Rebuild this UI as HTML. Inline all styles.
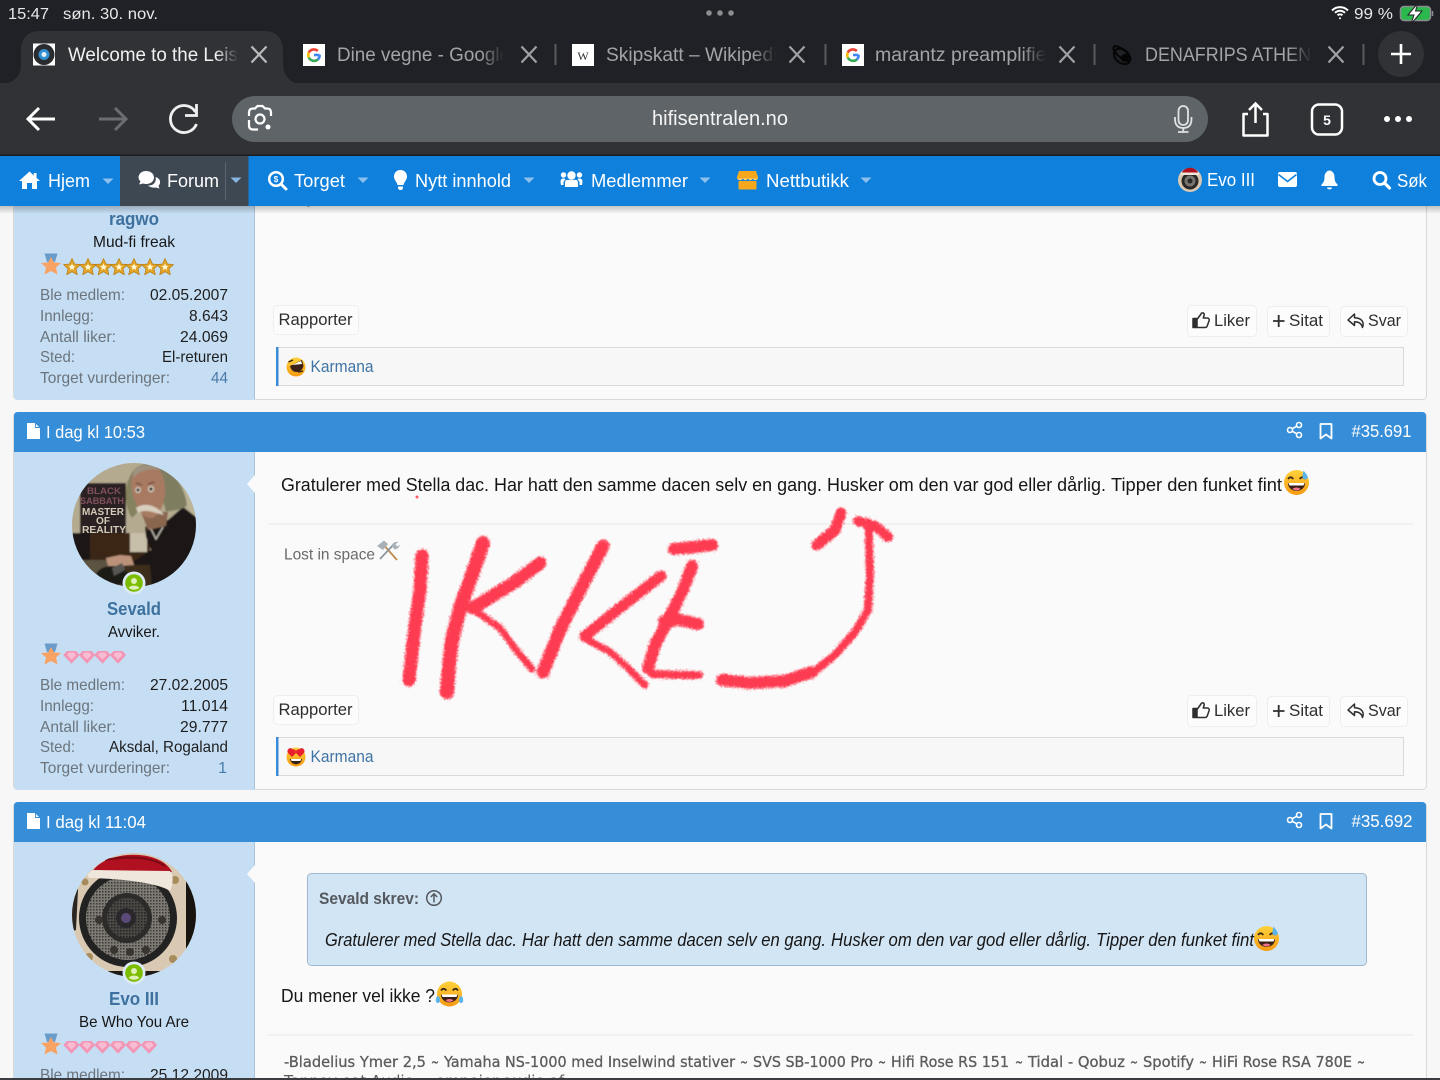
<!DOCTYPE html>
<html lang="no"><head><meta charset="utf-8"><title>hifisentralen.no</title>
<style>
html,body{margin:0;padding:0;background:#f7f7f7;width:1440px;height:1080px;overflow:hidden}
svg{display:block}
text{font-family:"Liberation Sans",Arial,sans-serif}
.nav{font-size:18.5px;fill:#fff}
.tab{font-size:19px;fill:#a3a4a6}
.lab{font-size:16px;fill:#6b747c}
.val{font-size:16px;fill:#1e1e1e;text-anchor:end}
.btn{font-size:17px;fill:#2e2e2e}
.hd{font-size:17.5px;fill:#fff}
.body{font-size:18.5px;fill:#161616}
.ita{font-size:18px;font-style:italic;fill:#161616}
.name{font-size:18.5px;font-weight:bold;fill:#3f719f;text-anchor:middle}
.title{font-size:16px;fill:#161616;text-anchor:middle}
.kar{font-size:16.5px;fill:#3f74a4}
.sig{font-size:15px;fill:#5c5c5c;stroke:#5c5c5c;stroke-width:.3px}
.sig,.sig2{font-family:"DejaVu Sans",sans-serif}
.sig2{font-size:15px;fill:#5c5c5c}
</style></head><body>
<svg xmlns="http://www.w3.org/2000/svg" width="1440" height="1080" viewBox="0 0 1440 1080">
<defs>
<linearGradient id="fa" x1="0" x2="1" y1="0" y2="0"><stop offset="0" stop-color="#303236" stop-opacity="0"/><stop offset="1" stop-color="#303236"/></linearGradient>
<linearGradient id="fi" x1="0" x2="1" y1="0" y2="0"><stop offset="0" stop-color="#1f2126" stop-opacity="0"/><stop offset="1" stop-color="#1f2126"/></linearGradient>
<linearGradient id="shadow" x1="0" x2="0" y1="0" y2="1"><stop offset="0" stop-color="#000" stop-opacity=".22"/><stop offset="1" stop-color="#000" stop-opacity="0"/></linearGradient>
<linearGradient id="emo" x1="0" x2="0" y1="0" y2="1"><stop offset="0" stop-color="#ffd23c"/><stop offset="1" stop-color="#f59a12"/></linearGradient>
<filter id="rough" x="-10%" y="-10%" width="120%" height="120%"><feTurbulence type="fractalNoise" baseFrequency=".85" numOctaves="2" seed="4"/><feDisplacementMap in="SourceGraphic" scale="8" xChannelSelector="R" yChannelSelector="G"/><feGaussianBlur stdDeviation=".5"/></filter>
<filter id="soft"><feGaussianBlur stdDeviation=".7"/></filter>
<filter id="soft2"><feGaussianBlur stdDeviation=".35"/></filter>
<clipPath id="c1"><circle cx="134" cy="525" r="62"/></clipPath>
<clipPath id="c2"><circle cx="134" cy="915" r="62"/></clipPath>
<pattern id="mesh" width="3" height="3" patternUnits="userSpaceOnUse"><rect width="3" height="3" fill="#7d7973"/><rect width="1.500" height="1.500" fill="#3a3835"/></pattern>
<pattern id="mesh2" width="3" height="3" patternUnits="userSpaceOnUse"><rect width="3" height="3" fill="#4a4845"/><rect width="1.500" height="1.500" fill="#232220"/></pattern>

<g id="caret"><path d="M-5.500-2.500H5.500L0 3Z" fill="#8ec0ee"/></g>
<g id="x"><path d="M-7.500-8 7.500 8M7.500-8-7.500 8" stroke-width="2.200" fill="none"/></g>
<g id="gfav"><rect x="-11" y="-11" width="22" height="22" fill="#fff"/>
<path d="M5.500 0H0" stroke="#4285f4" stroke-width="2.600" fill="none"/>
<path d="M5.600-.2A5.800 5.800 0 0 1 3.800 4.500" stroke="#4285f4" stroke-width="2.600" fill="none"/>
<path d="M3.800 4.500A5.800 5.800 0 0 1-5.200 2.500" stroke="#34a853" stroke-width="2.600" fill="none"/>
<path d="M-5.200 2.500A5.800 5.800 0 0 1-5.200-2.500" stroke="#fbbc05" stroke-width="2.600" fill="none"/>
<path d="M-5.200-2.500A5.800 5.800 0 0 1 3.800-4" stroke="#ea4335" stroke-width="2.600" fill="none"/></g>

<g id="medal"><path d="M-6.500-10.500H6.500L4-2H-4Z" fill="#6a9cc9"/><path d="M0-7 3-1.500 10 -1 5 3.500 6.500 10.500 0 7-6.500 10.500-5 3.500-10-1-3-1.500Z" fill="#f8a264"/></g>
<g id="star"><path d="M0-8.500 2.500-3 8.500-2.400 4 1.700 5.300 7.800 0 4.700-5.300 7.800-4 1.700-8.500-2.400-2.500-3Z" fill="#e2a52a" stroke="#b57c10" stroke-width=".7" stroke-linejoin="round"/><path d="M0-3.500 1-1.200 3.400-1 1.600.6 2.100 3 0 1.800-2.100 3-1.600.6-3.400-1-1-1.200Z" fill="#fff8d6"/></g>
<g id="gem"><path d="M-4.500-6H4.500L8.200-2 0 6.800-8.200-2Z" fill="#f296b6"/><path d="M-2.500-4.500H2.500L4.500-2 0 2.500-4.500-2Z" fill="#f9bcd2"/></g>

<g id="online"><circle r="11.500" fill="#dcebf7"/><circle r="8.800" fill="#7dbd00"/><circle cy="-2" r="3" fill="#dff0b8"/><path d="M-5.200 5C-4.200 1.800 4.200 1.800 5.200 5A8.800 8.800 0 0 1-5.200 5Z" fill="#dff0b8"/></g>

<g id="thumb"><path d="M1 7H5V16H1ZM5 8 9 2.500C9.500 1 12 .8 12.300 3L11.300 6.500H15.500C17 6.500 17.500 8 17 9.500L15.200 14.500C14.800 15.500 14 16 13 16H5" fill="none" stroke="#2e2e2e" stroke-width="1.500" stroke-linejoin="round"/><path d="M1 7H5V16H1Z" fill="#2e2e2e"/></g>
<g id="reply"><path d="M7.500 1.500 1 7.500 7.500 13V9.300C11.500 9.300 14.500 10.500 15.500 15 17.500 10 15 5.500 7.500 5.300Z" fill="none" stroke="#2e2e2e" stroke-width="1.500" stroke-linejoin="round"/></g>
<g id="share"><g fill="none" stroke="#fff" stroke-width="1.600"><circle cx="3.500" cy="8" r="2.500"/><circle cx="12.500" cy="3" r="2.500"/><circle cx="12.500" cy="13" r="2.500"/><path d="M5.700 6.800 10.300 4.200M5.700 9.200 10.300 11.800"/></g></g>
<g id="bm"><path d="M1 1H12V15.500L6.500 11.500 1 15.500Z" fill="none" stroke="#fff" stroke-width="1.800" stroke-linejoin="round"/></g>
<g id="doc"><path d="M0 0H8L13 5V16H0Z" fill="#fff"/><path d="M8.500 0V4.500H13" fill="none" stroke="#368dd8" stroke-width=".9"/></g>

<g id="grin"><circle r="12.500" fill="url(#emo)"/><path d="M-8.500-3.500Q-6-7-3.200-3.500M3.200-3.500Q6-7 8.500-3.500" fill="none" stroke="#3a2a18" stroke-width="1.800"/><path d="M-8.500 0.500H8.500C8.500 11-8.500 11-8.500 .5Z" fill="#3a2016"/><path d="M-8 .5H8L7 3H-7Z" fill="#fff"/><path d="M-4 6.300C-2 4.500 2 4.500 4 6.300 2 8.500-2 8.500-4 6.300Z" fill="#f0748a"/></g>
</defs>

<!-- page -->
<rect width="1440" height="1080" fill="#f7f7f7"/>

<!-- post 1 -->
<rect x="13.500" y="180" width="1413" height="219.500" rx="4" fill="#fafafa" stroke="#d9d9d9"/>
<path d="M14 180H255V400H18Q14 400 14 396Z" fill="#c6def4"/>
<path d="M254.500 180V399" stroke="#a9c3da"/>
<text x="304" y="203" font-size="16" fill="#555">g</text>
<text x="134" y="225" class="name" textLength="50" lengthAdjust="spacingAndGlyphs">ragwo</text>
<text x="134" y="247" class="title" textLength="82" lengthAdjust="spacingAndGlyphs">Mud-fi freak</text>
<use href="#medal" x="51" y="264"/>
<use href="#star" x="72" y="267"/><use href="#star" x="88" y="267"/><use href="#star" x="103.500" y="267"/><use href="#star" x="119" y="267"/><use href="#star" x="134" y="267"/><use href="#star" x="150" y="267"/><use href="#star" x="165" y="267"/>
<text x="40" y="300" class="lab" textLength="85" lengthAdjust="spacingAndGlyphs">Ble medlem:</text>
<text x="40" y="321" class="lab" textLength="54" lengthAdjust="spacingAndGlyphs">Innlegg:</text>
<text x="40" y="342" class="lab" textLength="76" lengthAdjust="spacingAndGlyphs">Antall liker:</text>
<text x="40" y="362" class="lab" textLength="35" lengthAdjust="spacingAndGlyphs">Sted:</text>
<text x="40" y="383" class="lab" textLength="130" lengthAdjust="spacingAndGlyphs">Torget vurderinger:</text>
<text x="228" y="300" class="val" textLength="78" lengthAdjust="spacingAndGlyphs">02.05.2007</text>
<text x="228" y="321" class="val" textLength="39" lengthAdjust="spacingAndGlyphs">8.643</text>
<text x="228" y="342" class="val" textLength="48" lengthAdjust="spacingAndGlyphs">24.069</text>
<text x="228" y="362" class="val" textLength="66" lengthAdjust="spacingAndGlyphs">El-returen</text>
<text x="228" y="383" class="val" style="fill:#4a7ba8" textLength="17" lengthAdjust="spacingAndGlyphs">44</text>

<rect x="273.500" y="305.500" width="85" height="29" rx="4" fill="#fcfcfc" stroke="#eeeeee"/>
<text x="278.500" y="325" class="btn" textLength="74" lengthAdjust="spacingAndGlyphs">Rapporter</text>
<rect x="1187.500" y="305.500" width="69" height="31" rx="4" fill="#fcfcfc" stroke="#eeeeee"/>
<rect x="1267.500" y="306.500" width="62" height="30" rx="4" fill="#fcfcfc" stroke="#eeeeee"/>
<rect x="1340.500" y="306.500" width="67" height="30" rx="4" fill="#fcfcfc" stroke="#eeeeee"/>
<use href="#thumb" x="1192" y="311.500"/>
<text x="1214" y="326" class="btn" textLength="36" lengthAdjust="spacingAndGlyphs">Liker</text>
<path d="M1273 321H1284.500M1278.700 315V327" stroke="#2e2e2e" stroke-width="1.800"/>
<text x="1289" y="326" class="btn" textLength="34" lengthAdjust="spacingAndGlyphs">Sitat</text>
<use href="#reply" x="1347" y="312.500"/>
<text x="1368" y="326" class="btn" textLength="33" lengthAdjust="spacingAndGlyphs">Svar</text>
<rect x="276.500" y="347.500" width="1127" height="38" fill="#f7f7f7" stroke="#dadada"/>
<rect x="276" y="347" width="2.500" height="39" fill="#3a8cd8"/>
<circle cx="296" cy="367" r="9.500" fill="url(#emo)"/>
<path d="M290 366 302 360 303.500 366C302 373 292 375 290 366Z" fill="#3a2016"/><path d="M292 365 301 361 302 364Z" fill="#fff"/><path d="M288.500 362 293 360M298 372 303 371" stroke="#3a2a18" stroke-width="1.500"/>
<text x="310.500" y="372" class="kar" textLength="63" lengthAdjust="spacingAndGlyphs">Karmana</text>

<!-- post 2 -->
<rect x="13.500" y="412.500" width="1413" height="377" rx="4" fill="#fafafa" stroke="#d9d9d9"/>
<path d="M14 452H255V790H18Q14 790 14 786Z" fill="#c6def4"/>
<path d="M254.500 452V789" stroke="#a9c3da"/>
<path d="M14 452V416Q14 412 18 412H1422Q1426 412 1426 416V452Z" fill="#368dd8"/>
<path d="M255 475 247 484 255 493Z" fill="#fafafa"/>
<use href="#doc" x="27" y="423"/>
<text x="46" y="438" class="hd" textLength="99" lengthAdjust="spacingAndGlyphs">I dag kl 10:53</text>
<use href="#share" x="1286.500" y="422"/><use href="#bm" x="1319.500" y="423"/>
<text x="1351.500" y="437" class="hd" textLength="60" lengthAdjust="spacingAndGlyphs">#35.691</text>

<g clip-path="url(#c1)"><g filter="url(#soft)">
<rect x="70" y="460" width="130" height="130" fill="#b4aa90"/>
<path d="M160 470 200 470V525L186 505Z" fill="#bdb396"/>
<rect x="80" y="483" width="46" height="50" fill="#2c2422"/>
<rect x="70" y="533" width="21" height="30" fill="#1c1612"/>
<rect x="90" y="533" width="60" height="33" fill="#3a2815"/>
<rect x="130" y="533" width="17" height="19" fill="#c8bfaa"/>
<rect x="70" y="560" width="60" height="30" fill="#5c5342"/>
<path d="M131 563 151 550 146 537 145 527 168 520 183 507 200 520V592H150Z" fill="#1b1917"/>
<path d="M125 565H150L152 590H120Z" fill="#3c2d1c"/>
<path d="M106 558 120 555 131 556 134 565 118 566 108 566Z" fill="#bb917a"/>
<ellipse cx="112" cy="576" rx="16" ry="10" fill="#1c1a16"/>
<path d="M112 568 122 563 125 570 114 576Z" fill="#595752"/>
<path d="M128 490C127 470 140 463 150 464 165 465 184 480 187 505 182 511 172 510 166 512L160 490Z" fill="#7f7d60"/>
<path d="M128 480C124 495 126 510 132 518L138 512 134 482Z" fill="#85825f"/>
<path d="M141 512 168 512 166 526 148 530Z" fill="#8a664f"/>
<path d="M131 482C132 470 142 464 150 465 160 466 165 476 165 490 165 503 160 518 150 518 140 518 132 498 131 482Z" fill="#a87a62"/>
<path d="M133 472C138 464 154 462 160 470 150 468 140 470 133 478Z" fill="#a09280"/>
<path d="M136 508C142 503 155 503 164 515 155 513 145 508 138 513Z" fill="#d9cfbe"/>
<ellipse cx="138" cy="490" rx="2.800" ry="3" fill="#ddd4c8"/><ellipse cx="151" cy="489" rx="3" ry="3.200" fill="#ddd4c8"/>
<circle cx="138" cy="490" r="1.600" fill="#2a1a14"/><circle cx="151" cy="489" r="1.700" fill="#2a1a14"/>
<path d="M136 483 142 485M148 484 155 482" stroke="#6a4a38" stroke-width="1.300"/>
<path d="M163 527 156 539 151 529" fill="none" stroke="#c4c0b4" stroke-width="1.300"/>
</g>
<g filter="url(#soft2)">
<text x="104" y="494" text-anchor="middle" font-size="9.500" font-weight="bold" fill="#80505c" textLength="34" lengthAdjust="spacingAndGlyphs">BLACK</text>
<text x="102" y="504" text-anchor="middle" font-size="9.500" font-weight="bold" fill="#80505c" textLength="44" lengthAdjust="spacingAndGlyphs">SABBATH</text>
<text x="103" y="515" text-anchor="middle" font-size="10.500" font-weight="bold" fill="#d6cbb8" textLength="42" lengthAdjust="spacingAndGlyphs">MASTER</text>
<text x="103" y="524" text-anchor="middle" font-size="10" font-weight="bold" fill="#d6cbb8" textLength="14" lengthAdjust="spacingAndGlyphs">OF</text>
<text x="104" y="533" text-anchor="middle" font-size="10.500" font-weight="bold" fill="#d6cbb8" textLength="44" lengthAdjust="spacingAndGlyphs">REALITY</text>
</g>
</g>
<use href="#online" x="134" y="583"/>
<text x="134" y="615" class="name" textLength="54" lengthAdjust="spacingAndGlyphs">Sevald</text>
<text x="134" y="637" class="title" textLength="52" lengthAdjust="spacingAndGlyphs">Avviker.</text>
<use href="#medal" x="51" y="654"/>
<use href="#gem" x="71.500" y="657"/><use href="#gem" x="87" y="657"/><use href="#gem" x="102.500" y="657"/><use href="#gem" x="118" y="657"/>
<text x="40" y="690" class="lab" textLength="85" lengthAdjust="spacingAndGlyphs">Ble medlem:</text>
<text x="40" y="711" class="lab" textLength="54" lengthAdjust="spacingAndGlyphs">Innlegg:</text>
<text x="40" y="732" class="lab" textLength="76" lengthAdjust="spacingAndGlyphs">Antall liker:</text>
<text x="40" y="752" class="lab" textLength="35" lengthAdjust="spacingAndGlyphs">Sted:</text>
<text x="40" y="773" class="lab" textLength="130" lengthAdjust="spacingAndGlyphs">Torget vurderinger:</text>
<text x="228" y="690" class="val" textLength="78" lengthAdjust="spacingAndGlyphs">27.02.2005</text>
<text x="228" y="711" class="val" textLength="47" lengthAdjust="spacingAndGlyphs">11.014</text>
<text x="228" y="732" class="val" textLength="48" lengthAdjust="spacingAndGlyphs">29.777</text>
<text x="228" y="752" class="val" textLength="119" lengthAdjust="spacingAndGlyphs">Aksdal, Rogaland</text>
<text x="227" y="773" class="val" style="fill:#4a7ba8">1</text>

<text x="281" y="491" class="body" textLength="208" lengthAdjust="spacingAndGlyphs">Gratulerer med Stella dac.</text>
<text x="494" y="491" class="body" textLength="328" lengthAdjust="spacingAndGlyphs">Har hatt den samme dacen selv en gang.</text>
<text x="827" y="491" class="body" textLength="279" lengthAdjust="spacingAndGlyphs">Husker om den var god eller dårlig.</text>
<text x="1111" y="491" class="body" textLength="171" lengthAdjust="spacingAndGlyphs">Tipper den funket fint</text>
<g transform="translate(1296.500 482.500)"><use href="#grin"/><path d="M7 -12C10-8 12.500-6 10.500-3.500 8-2 5.500-4 6-7Z" fill="#5cb3ea"/></g>
<path d="M268 524H1413" stroke="#eeeeee" stroke-width="1.500"/>
<text x="284" y="559.500" font-size="16" fill="#6a6a6a" textLength="91" lengthAdjust="spacingAndGlyphs">Lost in space</text>
<g transform="translate(377 541)"><path d="M5 2 20 19" stroke="#c18a4d" stroke-width="1.800"/><path d="M18 2 3 18" stroke="#8f979e" stroke-width="1.800"/><path d="M0 5 7-.5 11 3 6 9Z" fill="#a9b1b8"/><path d="M15 5C15 2 19 0 21 1L18.500 3.500 20.500 5.500 22.500 3.500C23 6 20 9 17 8Z" fill="#a9b1b8"/></g>

<rect x="273.500" y="695.500" width="85" height="29" rx="4" fill="#fcfcfc" stroke="#eeeeee"/>
<text x="278.500" y="715" class="btn" textLength="74" lengthAdjust="spacingAndGlyphs">Rapporter</text>
<rect x="1187.500" y="695.500" width="69" height="31" rx="4" fill="#fcfcfc" stroke="#eeeeee"/>
<rect x="1267.500" y="696.500" width="62" height="30" rx="4" fill="#fcfcfc" stroke="#eeeeee"/>
<rect x="1340.500" y="696.500" width="67" height="30" rx="4" fill="#fcfcfc" stroke="#eeeeee"/>
<use href="#thumb" x="1192" y="701.500"/>
<text x="1214" y="716" class="btn" textLength="36" lengthAdjust="spacingAndGlyphs">Liker</text>
<path d="M1273 711H1284.500M1278.700 705V717" stroke="#2e2e2e" stroke-width="1.800"/>
<text x="1289" y="716" class="btn" textLength="34" lengthAdjust="spacingAndGlyphs">Sitat</text>
<use href="#reply" x="1347" y="702.500"/>
<text x="1368" y="716" class="btn" textLength="33" lengthAdjust="spacingAndGlyphs">Svar</text>
<rect x="276.500" y="737.500" width="1127" height="38" fill="#f7f7f7" stroke="#dadada"/>
<rect x="276" y="737" width="2.500" height="39" fill="#3a8cd8"/>
<circle cx="296" cy="757" r="9.500" fill="url(#emo)"/>
<path d="M290 759H302C301 766 291 766 290 759Z" fill="#3a2016"/><path d="M291 759H301L300.500 761H291.500Z" fill="#fff"/>
<path d="M293 749.500C290 746 286 750 288 753L292 757 296 753C296.500 751 295 749 293 749.500ZM299 749.500C302 746 306 750 304 753L300 757 296 753C295.500 751 297 749 299 749.500Z" fill="#e8202e"/>
<text x="310.500" y="762" class="kar" textLength="63" lengthAdjust="spacingAndGlyphs">Karmana</text>

<!-- post 3 -->
<rect x="13.500" y="802.500" width="1413" height="300" rx="4" fill="#fafafa" stroke="#d9d9d9"/>
<rect x="14" y="842" width="241" height="240" fill="#c6def4"/>
<path d="M254.500 842V1080" stroke="#a9c3da"/>
<path d="M14 842V806Q14 802 18 802H1422Q1426 802 1426 806V842Z" fill="#368dd8"/>
<path d="M255 865 247 874 255 883Z" fill="#fafafa"/>
<use href="#doc" x="27" y="813"/>
<text x="46" y="828" class="hd" textLength="100" lengthAdjust="spacingAndGlyphs">I dag kl 11:04</text>
<use href="#share" x="1286.500" y="812"/><use href="#bm" x="1319.500" y="813"/>
<text x="1351.500" y="827" class="hd" textLength="61" lengthAdjust="spacingAndGlyphs">#35.692</text>

<g clip-path="url(#c2)">
<rect x="70" y="850" width="130" height="130" fill="#d9c9b3"/>
<rect x="186" y="850" width="14" height="130" fill="#17130f"/>
<path d="M70 850H80L76 930 70 932Z" fill="#2a2621"/>
<circle cx="128" cy="918" r="49" fill="#222"/>
<circle cx="128" cy="918" r="42" fill="url(#mesh)"/>
<circle cx="127" cy="918" r="25" fill="#2c2b2a"/>
<circle cx="127" cy="918" r="20" fill="url(#mesh2)"/>
<circle cx="126" cy="918" r="10" fill="#29272a"/>
<circle cx="126" cy="918" r="5" fill="#5a4a78"/>
<g fill="#38342f"><circle cx="99" cy="920" r="4"/><circle cx="162" cy="920" r="4"/><circle cx="114" cy="950" r="4"/><circle cx="130" cy="952" r="4"/><circle cx="146" cy="950" r="4"/></g>
<circle cx="173" cy="959" r="4" fill="#a88b5a"/><circle cx="89" cy="957" r="4" fill="#a88b5a"/><circle cx="175" cy="880" r="4" fill="#a88b5a"/><circle cx="85" cy="882" r="3.500" fill="#a88b5a"/>
<rect x="70" y="971" width="130" height="10" fill="#1d1a17"/>
<path d="M92 872C105 850 160 848 172 872Z" fill="#b0101f"/>
<path d="M105 860C125 856 150 856 165 866" fill="none" stroke="#7c0a14" stroke-width="2"/>
<path d="M93 870 170 871C174 876 173 884 170 891 160 884 130 879 90 878 86 877 87 873 93 870Z" fill="#efe7dc"/>
</g>
<use href="#online" x="134" y="973"/>
<text x="134" y="1005" class="name" textLength="50" lengthAdjust="spacingAndGlyphs">Evo III</text>
<text x="134" y="1027" class="title" textLength="110" lengthAdjust="spacingAndGlyphs">Be Who You Are</text>
<use href="#medal" x="51" y="1044"/>
<use href="#gem" x="71.500" y="1047"/><use href="#gem" x="87" y="1047"/><use href="#gem" x="102.500" y="1047"/><use href="#gem" x="118" y="1047"/><use href="#gem" x="133.500" y="1047"/><use href="#gem" x="149" y="1047"/>
<text x="40" y="1080" class="lab" textLength="85" lengthAdjust="spacingAndGlyphs">Ble medlem:</text>
<text x="228" y="1080" class="val" textLength="78" lengthAdjust="spacingAndGlyphs">25.12.2009</text>

<rect x="307.500" y="873.500" width="1059" height="92" rx="4" fill="#d2e5f5" stroke="#9fb8cf"/>
<text x="319" y="904" font-size="17" font-weight="bold" fill="#55595e" textLength="100" lengthAdjust="spacingAndGlyphs">Sevald skrev:</text>
<circle cx="434" cy="898" r="7.300" fill="none" stroke="#55595e" stroke-width="1.500"/><path d="M434 902.500V894M430.800 897 434 893.800 437.200 897" fill="none" stroke="#55595e" stroke-width="1.500"/>
<text x="325" y="946" class="ita" textLength="192" lengthAdjust="spacingAndGlyphs">Gratulerer med Stella dac.</text>
<text x="522" y="946" class="ita" textLength="304" lengthAdjust="spacingAndGlyphs">Har hatt den samme dacen selv en gang.</text>
<text x="831" y="946" class="ita" textLength="260" lengthAdjust="spacingAndGlyphs">Husker om den var god eller dårlig.</text>
<text x="1096" y="946" class="ita" textLength="158" lengthAdjust="spacingAndGlyphs">Tipper den funket fint</text>
<g transform="translate(1266.500 938.500)"><use href="#grin"/><path d="M7 -12C10-8 12.500-6 10.500-3.500 8-2 5.500-4 6-7Z" fill="#5cb3ea"/></g>
<text x="281" y="1002" class="body" textLength="154" lengthAdjust="spacingAndGlyphs">Du mener vel ikke ?</text>
<g transform="translate(449.500 994)"><use href="#grin"/><path d="M-12.500 2C-14.500 6-14 9-11.500 9-9.500 9-9 6-10 3ZM12.500 2C14.500 6 14 9 11.500 9 9.500 9 9 6 10 3Z" fill="#5cb3ea"/></g>
<path d="M268 1035H1413" stroke="#eeeeee" stroke-width="1.500"/>
<text x="284" y="1067" class="sig" textLength="142" lengthAdjust="spacingAndGlyphs">-Bladelius Ymer 2,5</text>
<text x="431" y="1067" class="sig" textLength="8" lengthAdjust="spacingAndGlyphs">~</text>
<text x="444" y="1067" class="sig" textLength="291" lengthAdjust="spacingAndGlyphs">Yamaha NS-1000 med Inselwind stativer</text>
<text x="740" y="1067" class="sig" textLength="8" lengthAdjust="spacingAndGlyphs">~</text>
<text x="753" y="1067" class="sig" textLength="120" lengthAdjust="spacingAndGlyphs">SVS SB-1000 Pro</text>
<text x="878" y="1067" class="sig" textLength="8" lengthAdjust="spacingAndGlyphs">~</text>
<text x="891" y="1067" class="sig" textLength="118" lengthAdjust="spacingAndGlyphs">Hifi Rose RS 151</text>
<text x="1015" y="1067" class="sig" textLength="8" lengthAdjust="spacingAndGlyphs">~</text>
<text x="1028" y="1067" class="sig" textLength="97" lengthAdjust="spacingAndGlyphs">Tidal - Qobuz</text>
<text x="1130" y="1067" class="sig" textLength="8" lengthAdjust="spacingAndGlyphs">~</text>
<text x="1143" y="1067" class="sig" textLength="51" lengthAdjust="spacingAndGlyphs">Spotify</text>
<text x="1199" y="1067" class="sig" textLength="8" lengthAdjust="spacingAndGlyphs">~</text>
<text x="1212" y="1067" class="sig" textLength="140" lengthAdjust="spacingAndGlyphs">HiFi Rose RSA 780E</text>
<text x="1357" y="1067" class="sig" textLength="8" lengthAdjust="spacingAndGlyphs">~</text>
<text x="284" y="1086" class="sig2" textLength="280" lengthAdjust="spacingAndGlyphs">Tannoy eat Audio ~ ompeier audio af</text>

<!-- IKKE scribble -->
<g filter="url(#rough)" fill="none" stroke="#ff3348" stroke-linecap="round" stroke-linejoin="round" opacity=".95">
<path d="M422 556 420 590 415 625 409 680" stroke-width="13"/>
<path d="M483 543 472 575 461 605 452 640 449 665 447 692" stroke-width="14"/>
<path d="M540 563 515 582 473 608" stroke-width="13"/>
<path d="M474 610 500 628 516 650 532 669" stroke-width="7"/>
<path d="M603 546 580 590 560 630 543 672" stroke-width="13"/>
<path d="M661 576 630 600 585 636" stroke-width="11"/>
<path d="M584 638 610 652 628 668 645 685" stroke-width="7"/>
<path d="M674 549 695 547 712 545" stroke-width="12"/>
<path d="M692 566 683 590 668 620 655 645 648 668" stroke-width="12"/>
<path d="M664 621 680 620 698 624" stroke-width="12"/>
<path d="M652 674 680 675 699 675" stroke-width="8"/>
<path d="M722 679 750 682 785 680 815 671 835 655 855 632 868 610 870 575 869 540 868 522" stroke-width="8"/>
<path d="M722 680 750 683 785 681 812 672" stroke-width="12"/>
<path d="M858 521 875 526 888 537" stroke-width="10"/>
<path d="M841 513 835 530 817 545" stroke-width="11"/>
</g>
<circle cx="417" cy="497" r="1.500" fill="#ff5a6a"/>

<!-- shadow -->
<rect x="0" y="206" width="1440" height="8" fill="url(#shadow)"/>
<rect x="0" y="1078" width="1440" height="2" fill="#3a3c40"/>

<!-- chrome -->
<rect width="1440" height="84" fill="#1f2126"/>
<rect y="83" width="1440" height="73" fill="#303236"/>
<rect y="154.500" width="1440" height="1.500" fill="#1a1c20"/>
<text x="8" y="19" font-size="16" fill="#e8e8e8" textLength="41" lengthAdjust="spacingAndGlyphs">15:47</text>
<text x="63" y="19" font-size="16" fill="#e8e8e8" textLength="95" lengthAdjust="spacingAndGlyphs">søn. 30. nov.</text>
<g fill="#8c8d90"><circle cx="709" cy="13" r="2.800"/><circle cx="720" cy="13" r="2.800"/><circle cx="731" cy="13" r="2.800"/></g>
<g transform="translate(1340 13)" fill="none" stroke="#fff" stroke-width="2"><path d="M-8-2.500C-3.500-7 3.500-7 8-2.500"/><path d="M-5-.2C-2-3 2-3 5-.2"/><path d="M-2.500 2.300C-1 1 1 1 2.500 2.300"/><circle cy="5.300" r="1" fill="#fff" stroke="none"/></g>
<text x="1354" y="19" font-size="16" fill="#e8e8e8" textLength="39" lengthAdjust="spacingAndGlyphs">99 %</text>
<rect x="1400.500" y="6.500" width="30" height="14" rx="3.500" fill="#2bb84c" stroke="#8b8d90" stroke-width="1.500"/>
<path d="M1432.500 11V16" stroke="#8b8d90" stroke-width="1.500"/>
<path d="M1418 3 1408 15H1414L1411 24 1422 11H1415.500Z" fill="#fff" stroke="#1f2126" stroke-width="1"/>

<!-- active tab -->
<path d="M0 84C14 84 21 76 21 64V50C21 38 28 31 40 31H264C276 31 283 38 283 50V64C283 76 292 84 300 84Z" fill="#303236"/>
<rect x="33" y="43.500" width="22" height="22" fill="#fff"/>
<circle cx="44" cy="54.500" r="10.500" fill="#292b2f"/><circle cx="44" cy="54.500" r="5.500" fill="#2f8fd0"/><circle cx="44" cy="54.500" r="2.500" fill="#e8f2fa"/>
<text x="68" y="61" class="tab" style="fill:#f0f0f0" textLength="197" lengthAdjust="spacingAndGlyphs">Welcome to the Leisure</text>
<rect x="216" y="40" width="22" height="30" fill="url(#fa)"/><rect x="238" y="40" width="30" height="30" fill="#303236"/>
<use href="#x" x="259" y="54.500" stroke="#b9babc"/>

<use href="#gfav" x="314" y="55"/>
<text x="337" y="61" class="tab" textLength="173" lengthAdjust="spacingAndGlyphs">Dine vegne - Google</text>
<rect x="480" y="40" width="24" height="30" fill="url(#fi)"/><rect x="504" y="40" width="14" height="30" fill="#1f2126"/>
<use href="#x" x="529" y="54.500" stroke="#a0a1a3"/>
<path d="M555.500 44V65M825.500 44V65M1094.500 44V65M1363.500 44V65" stroke="#5a5b5e" stroke-width="2"/>

<rect x="572" y="44" width="22" height="22" fill="#fff"/>
<text x="583" y="60" text-anchor="middle" font-size="12" style="font-family:'Liberation Serif',serif" fill="#333">W</text>
<text x="606" y="61" class="tab" textLength="182" lengthAdjust="spacingAndGlyphs">Skipskatt – Wikipedia</text>
<rect x="752" y="40" width="24" height="30" fill="url(#fi)"/><rect x="776" y="40" width="12" height="30" fill="#1f2126"/>
<use href="#x" x="797" y="54.500" stroke="#a0a1a3"/>

<use href="#gfav" x="853" y="55"/>
<text x="875" y="61" class="tab" textLength="178" lengthAdjust="spacingAndGlyphs">marantz preamplifier</text>
<rect x="1022" y="40" width="24" height="30" fill="url(#fi)"/><rect x="1046" y="40" width="12" height="30" fill="#1f2126"/>
<use href="#x" x="1067" y="54.500" stroke="#a0a1a3"/>

<g transform="translate(1122 55)" fill="none" stroke="#050505" stroke-width="2"><ellipse cx="1" cy="1" rx="9" ry="6.500" transform="rotate(40)"/><ellipse cx="-1" cy="-1" rx="10.500" ry="4" transform="rotate(40)"/><circle cx="3" cy="3" r="3" fill="#050505"/></g>
<text x="1145" y="61" class="tab" textLength="178" lengthAdjust="spacingAndGlyphs">DENAFRIPS ATHENA</text>
<rect x="1288" y="40" width="24" height="30" fill="url(#fi)"/><rect x="1312" y="40" width="14" height="30" fill="#1f2126"/>
<use href="#x" x="1336" y="54.500" stroke="#a0a1a3"/>
<circle cx="1401" cy="54" r="23" fill="#303236"/>
<path d="M1391 54H1411M1401 44V64" stroke="#fff" stroke-width="2.600"/>

<!-- toolbar -->
<path d="M55 119H29M39 108 28 119 39 130" fill="none" stroke="#fff" stroke-width="3"/>
<path d="M99 119H125M115 108 126 119 115 130" fill="none" stroke="#6b6d70" stroke-width="3"/>
<path d="M195.500 112A13.500 13.500 0 1 0 196.500 124" fill="none" stroke="#f0f0f0" stroke-width="2.800"/>
<path d="M196.500 104V115.500H185" fill="none" stroke="#f0f0f0" stroke-width="2.800"/>
<rect x="232" y="96" width="976" height="46" rx="23" fill="#5f6468"/>
<path d="M249 120V125.500Q249 129.500 253 129.500H258M249 116V112.500Q249 108.500 253 108.500H255L257.500 106H262.500L265 108.500H267Q271 108.500 271 112.500V116" fill="none" stroke="#fff" stroke-width="2.200"/>
<circle cx="260" cy="119" r="4.500" fill="none" stroke="#fff" stroke-width="2.200"/><circle cx="268" cy="127" r="2.500" fill="#fff"/>
<text x="720" y="125" text-anchor="middle" font-size="20" fill="#f4f4f4" textLength="136" lengthAdjust="spacingAndGlyphs">hifisentralen.no</text>
<g fill="none" stroke="#e0e2e3" stroke-width="1.800"><rect x="1178.500" y="106" width="9.500" height="19" rx="4.700"/><path d="M1175 117V119Q1175 128 1183.300 128 1191.500 128 1191.500 119V117M1183.300 128V132M1178 132H1188.500"/></g>
<path d="M1248 114H1243.500V135.500H1267.500V114H1263" fill="none" stroke="#fff" stroke-width="2.500" stroke-linejoin="round"/>
<path d="M1255.500 123V104M1249 110 1255.500 103.500 1262 110" fill="none" stroke="#fff" stroke-width="2.500"/>
<rect x="1312" y="104.500" width="30" height="30" rx="7" fill="none" stroke="#fff" stroke-width="2.500"/>
<text x="1327" y="125" text-anchor="middle" font-size="14" font-weight="bold" fill="#fff">5</text>
<g fill="#fff"><circle cx="1387" cy="119" r="3"/><circle cx="1398" cy="119" r="3"/><circle cx="1409" cy="119" r="3"/></g>

<!-- nav -->
<rect y="156" width="1440" height="50" fill="#0f80dc"/>
<rect x="120" y="156" width="128.500" height="50" fill="#3e4852"/>
<path d="M225.500 162V200" stroke="#5d6670"/>
<path d="M29.500 171.500 19 181H22V189H27V183H32V189H37V181H40L36.500 177.900V173H33.800V175.500Z" fill="#fff"/>
<use href="#caret" x="108" y="181"/>
<use href="#caret" x="236" y="180" style="opacity:.9"/>
<path d="M146 171C141 171 138.500 174.500 138.500 177.500 138.500 179 139.500 180.500 140.500 181.500L139 184.500 143 183.500Q144.500 184 146 184C151 184 154 181 154 177.500 154 174 151 171 146 171Z" fill="#fff"/>
<path d="M155.500 177C159 178 160.500 180.500 160 183 159.800 184 159.300 185 158.500 186L159.500 188.500 156 187.500C153 188 149.500 187 148 185.500 152 186 157 183 155.500 177Z" fill="#fff"/>
<text x="48" y="187" class="nav" textLength="42" lengthAdjust="spacingAndGlyphs">Hjem</text>
<text x="167" y="187" class="nav" textLength="52" lengthAdjust="spacingAndGlyphs">Forum</text>
<circle cx="276" cy="179" r="6.800" fill="none" stroke="#fff" stroke-width="2.500"/><path d="M281 184 286 189" stroke="#fff" stroke-width="3" stroke-linecap="round"/>
<text x="276" y="182" text-anchor="middle" font-size="8" font-weight="bold" fill="#fff">$</text>
<text x="294" y="187" class="nav" textLength="51" lengthAdjust="spacingAndGlyphs">Torget</text>
<use href="#caret" x="363" y="180"/>
<path d="M400.500 170C396.500 170 394 173 394 176.500 394 180 397 182 397.500 185H403.500C404 182 407 180 407 176.500 407 173 404.500 170 400.500 170Z" fill="#fff"/><path d="M398 186.500H403V188.500L401.500 190H399.500L398 188.500Z" fill="#fff"/>
<text x="415" y="187" class="nav" textLength="96" lengthAdjust="spacingAndGlyphs">Nytt innhold</text>
<use href="#caret" x="529" y="180"/>
<g fill="#fff"><circle cx="571.500" cy="175.500" r="4.200"/><circle cx="563.500" cy="175" r="2.700"/><circle cx="579.500" cy="175" r="2.700"/><path d="M565 187V183C565 179 568 180 571.500 180 575 180 578 179 578 183V187Z"/><path d="M561 185 560.500 182C560.500 178.500 563 178 565.500 179L563.500 182V185ZM582 185 582.500 182C582.500 178.500 580 178 577.500 179L579.500 182V185Z"/></g>
<text x="591" y="187" class="nav" textLength="97" lengthAdjust="spacingAndGlyphs">Medlemmer</text>
<use href="#caret" x="705" y="180"/>
<path d="M739 171H756L758 177V179H737V177Z" fill="#f6a71c"/><rect x="738.500" y="181" width="18" height="8.500" rx="1" fill="#f6a71c"/><path d="M737 178.500Q740 182 743 178.500 745 182 748 178.500 750 182 753 178.500 755 182 758 178.500" fill="#ffd879"/>
<text x="766" y="187" class="nav" textLength="83" lengthAdjust="spacingAndGlyphs">Nettbutikk</text>
<use href="#caret" x="866" y="180"/>
<circle cx="1190" cy="180" r="12" fill="#d8c8b2"/><circle cx="1190" cy="181" r="8.500" fill="#2a2826"/><circle cx="1190" cy="181" r="5.500" fill="#77736e"/><circle cx="1190" cy="181" r="2.500" fill="#292729"/><path d="M1181.500 173C1185 166 1195 166 1198.500 173Z" fill="#b0101f"/><path d="M1181 172.500H1199V175H1181Z" fill="#efe7dc"/>
<text x="1207" y="186" class="nav" textLength="48" lengthAdjust="spacingAndGlyphs">Evo III</text>
<rect x="1278" y="172" width="19" height="15" rx="2" fill="#fff"/><path d="M1278.500 174.500 1287.500 181.500 1296.500 174.500" fill="none" stroke="#0f80dc" stroke-width="1.600"/>
<path d="M1329.500 170.500C1326 171 1324.500 174 1324.500 177 1324.500 181 1323.500 182.500 1321.500 184.500V186H1337.500V184.500C1335.500 182.500 1334.500 181 1334.500 177 1334.500 174 1333 171 1329.500 170.500Z" fill="#fff"/><path d="M1327 187.500H1332C1332 190 1327 190 1327 187.500Z" fill="#fff"/>
<circle cx="1380" cy="178.500" r="6" fill="none" stroke="#fff" stroke-width="2.800"/><path d="M1384.500 183 1389.500 188" stroke="#fff" stroke-width="3.200" stroke-linecap="round"/>
<text x="1397" y="187" class="nav" textLength="30" lengthAdjust="spacingAndGlyphs">Søk</text>
</svg>
</body></html>
